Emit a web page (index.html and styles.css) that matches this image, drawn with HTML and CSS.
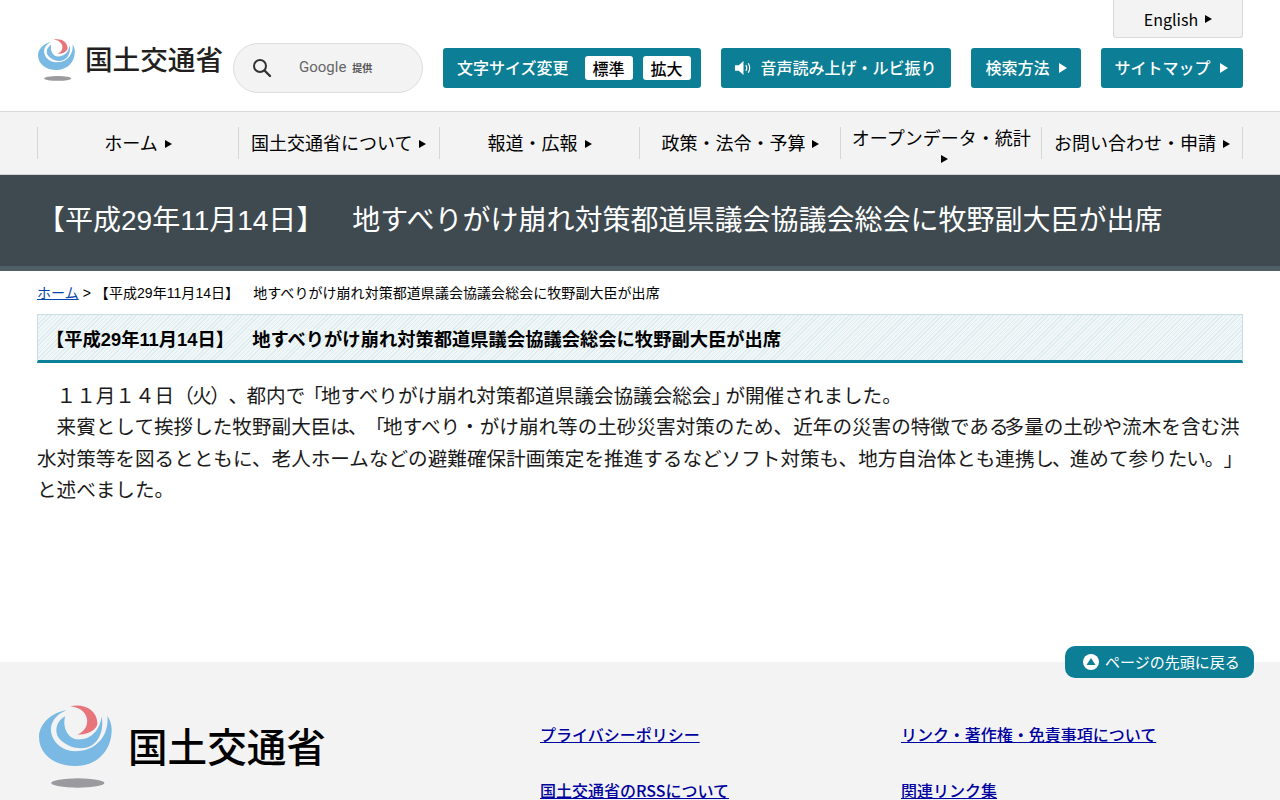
FILE: index.html
```html
<!DOCTYPE html>
<html lang="ja">
<head>
<meta charset="utf-8">
<title>国土交通省</title>
<link rel="stylesheet" href="styles.css">
</head>
<body>
<svg class="defs" width="0" height="0" aria-hidden="true">
  <symbol id="mlit-mark" viewBox="50 40 232 262">
    <path fill="#79b9e3" d="M140,62 C85,70 56,110 56,142 C56,195 105,230 165,230 C230,230 275,185 275,120 C275,105 270,90 262,78 C268,130 235,185 165,185 C120,185 90,150 92,115 C95,90 115,70 140,62 Z"/>
    <path fill="#79b9e3" d="M135,80 C108,95 104,120 112,140 C130,168 170,182 200,174 C238,163 252,122 245,80 C240,120 215,150 175,150 C145,150 125,115 135,80 Z"/>
    <path fill="#e8747c" d="M150,50 C190,40 230,60 232,100 C232,120 205,135 172,135 C195,125 205,105 200,85 C195,65 175,52 150,50 Z"/>
    <ellipse cx="173" cy="281" rx="80" ry="14" fill="#9a9a9f"/>
  </symbol>
</svg>

<header class="site-header">
  <div class="lang-row">
    <a class="lang-tab arrow" href="#">English</a>
  </div>
  <div class="header-main">
    <a class="logo" href="#">
      <svg class="logo-mark"><use href="#mlit-mark"/></svg>
      <span class="logo-text">国土交通省</span>
    </a>
    <div class="search">
      <svg class="search-icon" viewBox="0 0 20 20"><circle cx="8" cy="8" r="6" fill="none" stroke="#333" stroke-width="2"/><path d="M12.5 12.5 L18 18" stroke="#333" stroke-width="2.4" stroke-linecap="round"/></svg>
      <span class="google">Google</span>
      <span class="provided">提供</span>
    </div>
    <div class="tools">
      <div class="tool tool-size">
        <span class="size-label">文字サイズ変更</span>
        <span class="chip">標準</span>
        <span class="chip">拡大</span>
      </div>
      <a class="tool tool-voice" href="#">
        <svg class="speaker" viewBox="0 0 20 18"><path fill="#fff" d="M1 6 H5 L10 1.5 V16.5 L5 12 H1 Z"/><path fill="none" stroke="#fff" stroke-width="1.2" d="M12.5 6 Q14.5 9 12.5 12 M15 4 Q18 9 15 14"/></svg>
        音声読み上げ・ルビ振り
      </a>
      <a class="tool tool-search arrow arrow-white" href="#">検索方法</a>
      <a class="tool tool-map arrow arrow-white" href="#">サイトマップ</a>
    </div>
  </div>
</header>

<nav class="global-nav">
  <a class="nav-item arrow" href="#">ホーム</a>
  <a class="nav-item arrow" href="#">国土交通省について</a>
  <a class="nav-item arrow" href="#">報道・広報</a>
  <a class="nav-item arrow" href="#">政策・法令・予算</a>
  <a class="nav-item arrow" href="#">オープンデータ・統計</a>
  <a class="nav-item arrow" href="#">お問い合わせ・申請</a>
</nav>

<div class="page-title">
  <h1>【平成29年11月14日】　地すべりがけ崩れ対策都道県議会協議会総会に牧野副大臣が出席</h1>
</div>

<main class="content">
  <p class="breadcrumb"><a href="#">ホーム</a> &gt; 【平成29年11月14日】　地すべりがけ崩れ対策都道県議会協議会総会に牧野副大臣が出席</p>
  <h2 class="article-title">【平成29年11月14日】　地すべりがけ崩れ対策都道県議会協議会総会に牧野副大臣が出席</h2>
  <p class="article-body">　１１月１４日<span class="tight">（火）、</span>都内<span class="tight-s">で「</span>地すべりがけ崩れ対策都道県議会協議会総会<span class="tight-l">」</span>が開催されました。<br>　来賓として挨拶した牧野副大臣<span class="tight-s">は、「</span>地すべり・がけ崩れ等の土砂災害対策のため、近年の災害の特徴であ<span class="tight-m">る</span>多量の土砂や流木を含む洪<br>水対策等を図るとともに、老人ホームなどの避難確保計画策定を推進するなどソフト対策も、地方自治体とも連携<span class="tight-s">し、</span>進めて参り<span class="tight-xs">たい。」</span><br>と述べました。</p>
</main>

<footer class="site-footer">
  <a class="to-top" href="#">
    <svg class="to-top-icon" viewBox="0 0 16 16"><circle cx="8" cy="8" r="8" fill="#fff"/><path d="M8 4 L12.5 11 H3.500 Z" fill="#0c7e95"/></svg>
    ページの先頭に戻る
  </a>
  <a class="footer-logo" href="#">
    <svg class="footer-mark"><use href="#mlit-mark"/></svg>
    <span class="footer-logo-text">国土交通省</span>
  </a>
  <ul class="footer-links">
    <li><a href="#">プライバシーポリシー</a></li>
    <li><a href="#">リンク・著作権・免責事項について</a></li>
    <li><a href="#">国土交通省のRSSについて</a></li>
    <li><a href="#">関連リンク集</a></li>
  </ul>
</footer>
</body>
</html>
```

FILE: styles.css
```css
* { box-sizing: border-box; }
html, body { margin: 0; padding: 0; }
body {
  font-family: "Noto Sans CJK JP", "Noto Sans", sans-serif;
  color: #000;
  background: #fff;
  height: 800px;
  overflow: hidden;
  text-spacing-trim: space-all;
}
a { color: inherit; text-decoration: none; }
.defs { position: absolute; }

.arrow::after {
  content: "";
  display: inline-block;
  width: 0;
  height: 0;
  margin-left: 7px;
  border-left: 7px solid #000;
  border-top: 4px solid transparent;
  border-bottom: 4px solid transparent;
  vertical-align: 2px;
}
.arrow-white::after { border-left-color: #fff; border-left-width: 8px; border-top-width: 5px; border-bottom-width: 5px; margin-left: 9px; margin-top: 2px; }

/* header */
.site-header {
  height: 112px;
  padding: 0 37px;
  border-bottom: 1px solid #d9d9d9;
}
.lang-row { display: flex; justify-content: flex-end; height: 38px; }
.lang-tab {
  width: 130px;
  height: 38px;
  display: flex;
  align-items: center;
  justify-content: center;
  font-size: 16px;
  background: #f3f3f3;
  border: 1px solid #d9d9d9;
  border-top: 0;
  border-radius: 0 0 3px 3px;
}
.header-main { display: flex; align-items: flex-start; }
.logo { display: flex; width: 196px; height: 44px; align-items: flex-start; }
.logo-mark { width: 43px; height: 44px; flex: none; margin-left: -2px; }
.logo-text { font-size: 27.6px; font-weight: 500; line-height: 28px; margin: 6px 0 0 7px; color: #231f20; white-space: nowrap; }
.search {
  width: 190px;
  height: 50px;
  margin-top: 5px;
  border: 1px solid #dcdcdc;
  border-radius: 25px;
  background: #f3f3f3;
  display: flex;
  align-items: center;
  padding-left: 18px;
}
.search-icon { width: 20px; height: 20px; flex: none; }
.google { font-family: Roboto, sans-serif; font-size: 15px; color: #666; margin-left: 27px; margin-top: -2px; }
.provided { font-size: 10px; font-weight: 700; color: #555; margin-left: 6px; margin-top: -1px; }
.tools { display: flex; gap: 20px; margin: 10px 0 0 20px; }
.tool {
  height: 40px;
  display: flex;
  align-items: center;
  padding: 0 14px 2px;
  background: #0c7e95;
  color: #fff;
  border-radius: 3px;
  font-size: 16px;
  font-weight: 500;
  white-space: nowrap;
}
.size-label { margin-right: 16px; }
.chip {
  width: 48px;
  height: 24px;
  background: #fff;
  color: #000;
  border-radius: 3px;
  display: flex;
  align-items: center;
  justify-content: center;
  margin-top: 2px;
  margin-right: 10px;
}
.chip:last-child { margin-right: 0; }
.tool-size { padding-right: 10px; }
.speaker { width: 20px; height: 18px; margin-right: 8px; margin-top: 2px; }
.tool-voice { width: 230px; padding-left: 13px; }
.tool-search { width: 110px; padding-left: 15px; }
.tool-map { width: 142px; }

/* nav */
.global-nav {
  height: 63px;
  padding: 15px 37px 0;
  background: #f3f3f3;
  border-bottom: 1px solid #d3d3d3;
  display: flex;
  align-items: flex-start;
}
.nav-item {
  flex: 1;
  height: 32px;
  padding: 4px 10px 0;
  border-left: 1px solid #d6d6d6;
  font-size: 18px;
  line-height: 22px;
  display: block;
  text-align: center;
  white-space: normal;
}
.nav-item:last-child { border-right: 1px solid #d6d6d6; }
.nav-item:nth-child(5) { padding-top: 0; line-height: 20px; }

/* title */
.page-title {
  height: 96px;
  background: #3e4a50;
  border-bottom: 5px solid #505f66;
  padding: 28px 37px 0;
}
.page-title h1 {
  margin: 0;
  font-family: "Liberation Sans", "Noto Sans CJK JP", sans-serif;
  font-size: 28px;
  font-weight: 400;
  line-height: 36px;
  color: #fff;
  white-space: nowrap;
}

/* content */
.content { padding: 0 37px; height: 391px; }
.breadcrumb {
  margin: 0;
  padding-top: 12px;
  height: 43px;
  font-family: "Liberation Sans", "Noto Sans CJK JP", sans-serif;
  font-size: 14px;
  line-height: 20px;
  letter-spacing: 0.05px;
}
.breadcrumb a { color: #0645ad; text-decoration: underline; }
.article-title {
  margin: 0;
  height: 49px;
  padding: 10px 8px 0;
  font-family: "Liberation Sans", "Noto Sans CJK JP", sans-serif;
  font-size: 18.3px;
  font-weight: 700;
  line-height: 30px;
  border: 1px solid #cadde3;
  border-bottom: 3px solid #0c8197;
  background: repeating-linear-gradient(-45deg, #dcecef 0, #dcecef 1px, #f1f7f8 1px, #f1f7f8 3px);
  white-space: nowrap;
}
.article-body {
  margin: 18px 0 0;
  font-family: "Liberation Sans", "Noto Sans CJK JP", sans-serif;
  font-size: 19.6px;
  line-height: 31.36px;
  color: #1a1a1a;
  white-space: nowrap;
}
.tight { letter-spacing: -1.5px; }
.tight-xs { letter-spacing: -1px; }
.tight-s { letter-spacing: -2px; }
.tight-m { letter-spacing: -4px; }
.tight-l { letter-spacing: -5.6px; }

/* footer */
.site-footer {
  position: relative;
  height: 200px;
  background: #f3f3f3;
  padding: 40px 37px 0;
  display: flex;
  align-items: flex-start;
}
.to-top {
  position: absolute;
  top: -16px;
  right: 26px;
  width: 189px;
  height: 32px;
  display: flex;
  align-items: center;
  padding-left: 18px;
  background: #0c7e95;
  color: #fff;
  border-radius: 10px;
  font-size: 15px;
  padding-bottom: 2px;
}
.to-top-icon { width: 16px; height: 16px; margin-right: 6px; margin-top: 2px; }
.footer-logo { display: flex; width: 503px; height: 88px; flex: none; }
.footer-mark { width: 77px; height: 89px; flex: none; }
.footer-logo-text { font-size: 39.6px; font-weight: 500; line-height: 48px; margin: 19px 0 0 14px; white-space: nowrap; }
.footer-links {
  list-style: none;
  margin: 0;
  padding: 20px 0 0;
  flex: 1;
  display: grid;
  grid-template-columns: 361px 1fr;
  row-gap: 32px;
  font-size: 16px;
  font-weight: 500;
  line-height: 24px;
}
.footer-links a { color: #0000a0; text-decoration: underline; }
```
